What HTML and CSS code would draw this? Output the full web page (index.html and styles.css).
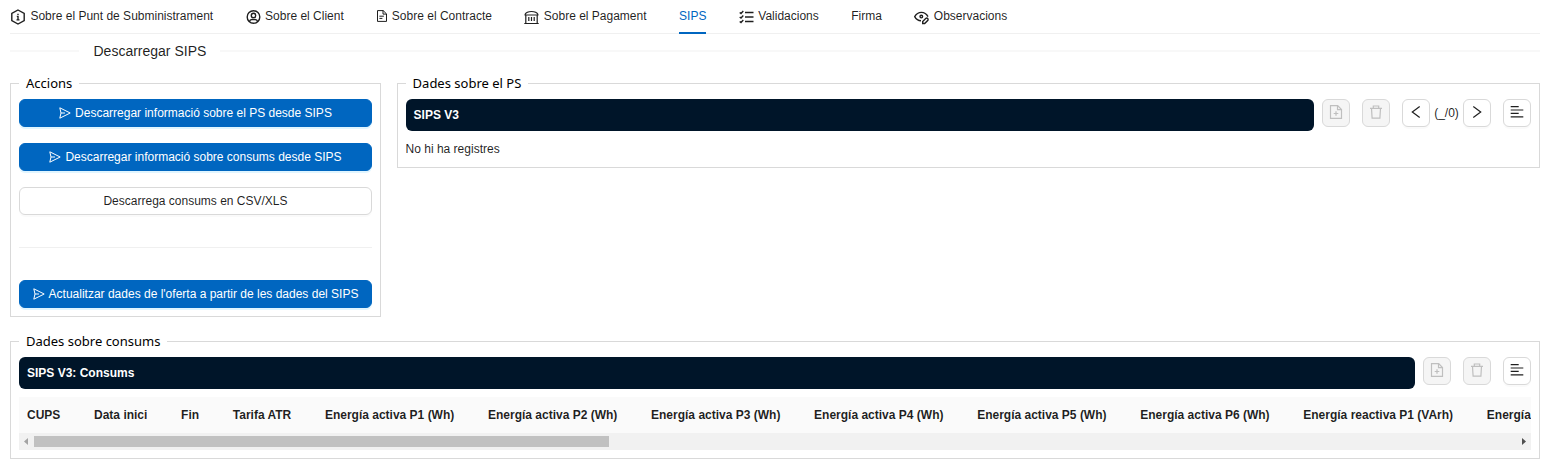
FILE: index.html
```html
<!DOCTYPE html>
<html lang="ca">
<head>
<meta charset="utf-8">
<title>SIPS</title>
<link rel="stylesheet" href="styles.css">
</head>
<body>
<svg class="defs" width="0" height="0">
  <symbol id="send" viewBox="0 0 12 12"><path d="M.8 .8 11.2 6 .8 11.2 2 6zM2 6h4"/></symbol>
  <symbol id="fileadd" viewBox="0 0 14 14"><path d="M1.5 .7h7.2l3.8 3.8v8.8h-11zM8.5 .7v4h4M7 6.2v4.6M4.7 8.5h4.6"/></symbol>
  <symbol id="trash" viewBox="0 0 14 14"><path d="M1 3.3h12M4.3 3.3V1h5.4v2.3M2.5 3.3l.6 9.9h7.8l.6-9.9"/></symbol>
  <symbol id="lines" viewBox="0 0 14 14"><path d="M.7 1.6h8M.7 5h12.6M.7 8.4h8M.7 11.8h12.6"/></symbol>
</svg>
<nav class="tabs">
  <a class="tab"><svg class="icon low" width="16" height="16" viewBox="0 0 16 16"><path d="M8 1l6.2 3.4v7.2L8 15l-6.2-3.4V4.4zM6.8 7.4H8v3.400M6.500 10.900h3"/><path d="M8 4.700v1.300"/></svg>Sobre el Punt de Subministrament</a>
  <a class="tab"><svg class="icon low" width="15" height="16" viewBox="0 0 15 16"><circle cx="7.5" cy="8" r="6.3"/><circle cx="7.5" cy="6.4" r="2.2"/><path d="M3.5 12.5c.3-1.5 1.3-2 2.5-2h3c1.2 0 2.200.5 2.500 2"/></svg>Sobre el Client</a>
  <a class="tab"><svg class="icon file" width="12" height="12" viewBox="0 0 12 12"><path d="M1.500.6h5.700l3.300 3.300v7.500h-9zM7 .6v3.500h3.500M3.400 6.200h4.500M3.400 8.400h3"/></svg>Sobre el Contracte</a>
  <a class="tab"><svg class="icon low bank" width="15" height="16" viewBox="0 0 15 16"><path d="M.3 14.500h14.400M.5 6h14M1 5.500c2-4 11-4 13 0M1.800 6v8M13.200 6v8"/><path d="M4.800 8v4M7.500 8v4M10.200 8v4"/></svg>Sobre el Pagament</a>
  <a class="tab active">SIPS</a>
  <a class="tab"><svg class="icon low" width="15" height="16" viewBox="0 0 15 16"><path d="M6 3.500h8.500M6 8h8.500M6 12.500h8.500M.7 3.500l1.300 1 2.300-2.400M.7 8l1.300 1 2.300-2.400M.7 12.500l1.300 1 2.300-2.400"/></svg>Validacions</a>
  <a class="tab firma">Firma</a>
  <a class="tab"><svg class="icon low" width="15" height="16" viewBox="0 0 15 16"><path d="M7 11.800C4.300 11.800 2.100 10.300.7 7.700 3.900 2 10.900 2 14 7.600"/><circle cx="7.300" cy="7.600" r="1.300"/><path d="M8.700 14.500v-2l3.200-3.200c1.500-.7 2.600.5 2 2l-3.200 3.200z"/></svg>Observacions</a>
</nav>
<div class="heading"><span>Descarregar SIPS</span></div>
<div class="columns">
  <section class="panel actions">
    <h2 class="legend"><span>Accions</span></h2>
    <button class="btn primary"><svg width="12" height="12"><use href="#send"/></svg>Descarregar informació sobre el PS desde SIPS</button>
    <button class="btn primary"><svg width="12" height="12"><use href="#send"/></svg>Descarregar informació sobre consums desde SIPS</button>
    <button class="btn">Descarrega consums en CSV/XLS</button>
    <div class="rule"></div>
    <button class="btn primary"><svg width="12" height="12"><use href="#send"/></svg>Actualitzar dades de l'oferta a partir de les dades del SIPS</button>
  </section>
  <section class="panel supply">
    <h2 class="legend"><span>Dades sobre el PS</span></h2>
    <div class="toolbar">
      <div class="title">SIPS V3</div>
      <button class="tool disabled"><svg width="14" height="14"><use href="#fileadd"/></svg></button>
      <button class="tool disabled"><svg width="14" height="14"><use href="#trash"/></svg></button>
      <div class="pager">
        <button class="tool"><svg width="14" height="14" viewBox="0 0 14 14"><path d="M10.700 1.500 3.300 7l7.400 5.500"/></svg></button>
        <span>(_/0)</span>
        <button class="tool"><svg width="14" height="14" viewBox="0 0 14 14"><path d="M3.300 1.500l7.400 5.500-7.400 5.500"/></svg></button>
      </div>
      <button class="tool"><svg width="14" height="14"><use href="#lines"/></svg></button>
    </div>
    <p class="empty">No hi ha registres</p>
  </section>
</div>
<section class="panel usage">
  <h2 class="legend"><span>Dades sobre consums</span></h2>
  <div class="toolbar">
    <div class="title">SIPS V3: Consums</div>
    <button class="tool disabled"><svg width="14" height="14"><use href="#fileadd"/></svg></button>
    <button class="tool disabled"><svg width="14" height="14"><use href="#trash"/></svg></button>
    <button class="tool"><svg width="14" height="14"><use href="#lines"/></svg></button>
  </div>
  <div class="thead">
    <span>CUPS</span><span>Data inici</span><span>Fin</span><span>Tarifa ATR</span><span>Energía activa P1 (Wh)</span><span>Energía activa P2 (Wh)</span><span>Energía activa P3 (Wh)</span><span>Energía activa P4 (Wh)</span><span>Energía activa P5 (Wh)</span><span>Energía activa P6 (Wh)</span><span>Energía reactiva P1 (VArh)</span><span>Energía</span>
  </div>
  <div class="scrollbar">
    <svg width="15" height="17" viewBox="0 0 15 17"><path fill="#a3a3a3" d="M9 5v7L5 8.500z"/></svg>
    <div class="thumb"></div>
    <svg width="15" height="17" viewBox="0 0 15 17"><path fill="#505050" d="M6 5v7l4-3.500z"/></svg>
  </div>
</section>
</body>
</html>
```

FILE: styles.css
```css
* { box-sizing: border-box; }
body { margin: 0; padding: 0 13px 0 10px; background: #fff; color: rgba(0,0,0,.88); font: 12px/20px "Liberation Sans", Arial, sans-serif; overflow: hidden; }
.defs { display: block; height: 0; }
svg { flex: none; fill: none; stroke: currentColor; stroke-width: 1; }
.tabs { display: flex; gap: 32.5px; height: 34px; border-bottom: 1px solid #f0f0f0; }
.tab { display: flex; height: 34px; padding-top: 6px; white-space: nowrap; }
.tab.active { color: #0066c0; border-bottom: 2px solid #0066c0; }
.icon { stroke-width: 1.4; margin-right: 4.4px; }
.low { margin-top: 3px; }
.bank { stroke-width: 1.2; }
.file { stroke-width: 1; margin-top: 4px; margin-right: 3.6px; }
.heading { display: flex; align-items: center; height: 34px; font-size: 14px; }
.heading::before, .heading::after { content: ""; height: 2px; background: #f8f8f8; }
.heading::before { width: 69px; }
.heading::after { flex: 1; }
.heading span { padding: 0 13.5px 0 14.5px; }
.columns { display: flex; gap: 15.6px; align-items: flex-start; margin-top: 15px; }
.panel { border: 1px solid #d9d9d9; padding: 0 8px; }
.legend { margin: -11px 0 6px; height: 20px; font: 400 13px/20px "Noto Sans", sans-serif; color: #000; }
.legend span { display: inline-block; background: #fff; padding: 0 7px; }
.actions { width: 371px; height: 234px; }
.supply { flex: 1; height: 85px; }
.usage { height: 118px; margin-top: 24px; }
.btn, .tool { font: inherit; color: inherit; background: #fff; border: 1px solid #d9d9d9; border-radius: 6px; box-shadow: 0 2px 0 rgba(0,0,0,.02); display: flex; align-items: center; justify-content: center; padding: 0; }
.btn { width: 100%; height: 28px; gap: 4px; margin-bottom: 16px; white-space: nowrap; }
.primary { background: #0066c0; border-color: #0066c0; color: #fff; box-shadow: 0 2px 0 #e0f5ff; }
.rule { height: 1px; background: #f0f0f0; margin: 32px 0; }
.toolbar { display: flex; align-items: flex-start; }
.title { flex: 1; height: 32px; padding-left: 8px; border-radius: 6px; background: #001529; color: #fff; font-weight: 700; line-height: 32px; margin-right: 8px; }
.tool { width: 28px; height: 28px; padding-bottom: 2px; }
.tool svg { stroke-width: 1.2; }
.tool + .tool, .pager, .pager + .tool { margin-left: 12px; }
.disabled { background: #f5f5f5; color: #bfbfbf; box-shadow: none; }
.pager { display: flex; line-height: 28px; }
.pager span { width: 33px; text-align: center; }
.empty { margin: 8px 0 0; }
.thead { display: flex; height: 36px; margin-top: 8px; padding-left: 8px; background: #fafafa; font-weight: 700; line-height: 36px; white-space: nowrap; overflow: hidden; gap: 33.7px; }
.thead span { flex: none; }
.scrollbar { display: flex; align-items: center; height: 17px; background: #f1f1f1; }
.scrollbar svg { stroke: none; }
.thumb { width: 575px; height: 11px; background: #c1c1c1; margin-right: auto; }
```
